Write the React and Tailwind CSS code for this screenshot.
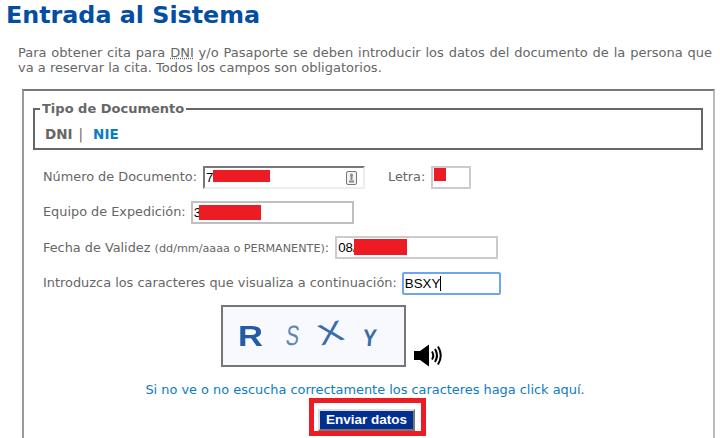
import React from "react";

const Redacted = ({ className }) => (
  <span className={"absolute bg-[#ed1c24] " + className} />
);

const Speaker = () => (
  <svg width="29" height="23" viewBox="0 0 29 23" className="block">
    <path d="M0 7h6l9-6.500v22l-9-6.500H0z" fill="#000" />
    <path d="M18 7.500q2.500 4 0 8" fill="none" stroke="#000" strokeWidth="2" />
    <path d="M21 5q4 6.500 0 13" fill="none" stroke="#000" strokeWidth="2" />
    <path d="M24 2.500q5.500 9 0 18" fill="none" stroke="#000" strokeWidth="2" />
  </svg>
);

const KeyIcon = () => (
  <svg width="11" height="14" viewBox="0 0 11 14" className="absolute right-[8px] top-[5px]">
    <rect x="0.500" y="0.500" width="10" height="13" rx="1.500" fill="#f2f2f2" stroke="#777" />
    <circle cx="5.500" cy="4" r="1.500" fill="#888" />
    <rect x="4.500" y="5" width="2" height="4" fill="#888" />
    <rect x="3" y="9.500" width="5" height="2" fill="#888" />
  </svg>
);

export default function App() {
  return (
    <div className="h-[438px] w-[720px] overflow-hidden bg-white font-['DejaVu_Sans',Verdana,sans-serif] text-[#666]">
      <h1 className="ml-[6px] pt-[1px] text-[23.800px] leading-[29px] font-bold text-[#034ea2]">
        Entrada al Sistema
      </h1>
      <div className="mt-[15px] ml-[18px] w-[694px] text-[13px] leading-[15px]">
        <p className="[text-align-last:justify]">
          Para obtener cita para{" "}
          <abbr className="underline decoration-dotted" title="Documento Nacional de Identidad">
            DNI
          </abbr>{" "}
          y/o Pasaporte se deben introducir los datos del documento de la persona que
        </p>
        <p>va a reservar la cita. Todos los campos son obligatorios.</p>
      </div>

      <div className="mt-[14px] ml-[22px] h-[400px] w-[693px] border-2 border-t-[#777] border-r-[#bbb] border-b-0 border-l-[#999] pt-[10px] pl-[9px]">
        <fieldset className="h-[49px] w-[670px] border-[2px] border-[#666] pl-[5px]">
          <legend className="px-[2px] text-[13px] leading-[16px] font-bold">Tipo de Documento</legend>
          <div className="mt-[9px] flex items-center pl-[5px] text-[13.500px] leading-[16px] font-bold">
            <span>DNI</span>
            <span className="ml-[6px] font-normal">|</span>
            <a className="ml-[10px] text-[#0b7cc4]">NIE</a>
          </div>
        </fieldset>

        <div className="mt-[16px] flex items-center pl-[10px] text-[12.850px]">
          <label className="mr-[6px] mb-[2px]">Número de Documento:</label>
          <div className="relative h-[23px] w-[162px]">
            <input
              readOnly
              value="7"
              className="h-full w-full border-2 border-t-[#777] border-r-[#eee] border-b-[#eee] border-l-[#777] bg-white pl-[1px] font-['Liberation_Sans',sans-serif] text-[13.330px] text-black"
            />
            <Redacted className="left-[10px] top-[4px] h-[12px] w-[57px]" />
            <KeyIcon />
          </div>
          <label className="mr-[6px] mb-[2px] ml-[23px]">Letra:</label>
          <div className="relative h-[23px] w-[40px]">
            <input readOnly className="h-full w-full border-2 border-[#ccc] bg-white" />
            <Redacted className="left-[3px] top-[2px] h-[13px] w-[12px]" />
          </div>
        </div>

        <div className="mt-[12px] flex items-center pl-[10px] text-[12.850px]">
          <label className="mr-[5px] mb-[2px]">Equipo de Expedición:</label>
          <div className="relative h-[23px] w-[163px]">
            <input
              readOnly
              value="3"
              className="h-full w-full border-2 border-[#c0c0c0] bg-white pl-[1px] font-['Liberation_Sans',sans-serif] text-[13.330px] text-black"
            />
            <Redacted className="left-[8px] top-[4px] h-[15px] w-[62px]" />
          </div>
        </div>

        <div className="mt-[12px] flex items-center pl-[10px] text-[12.850px]">
          <label className="mr-[6px]">
            Fecha de Validez{" "}
            <span className="text-[11.200px]">(dd/mm/aaaa o PERMANENTE)</span>:
          </label>
          <div className="relative h-[23px] w-[163px]">
            <input
              readOnly
              value="08/"
              className="h-full w-full border-2 border-[#ccc] bg-white pl-[1px] font-['Liberation_Sans',sans-serif] text-[13.330px] text-black"
            />
            <Redacted className="left-[19px] top-[3px] h-[16px] w-[53px]" />
          </div>
        </div>

        <div className="mt-[13px] flex items-center pl-[10px] text-[12.900px]">
          <label className="mr-[5px] mb-[2px]">Introduzca los caracteres que visualiza a continuación:</label>
          <div className="h-[23px] w-[99px] rounded-[2px] border-2 border-[#6ea6ee] pl-[1px] font-['Liberation_Sans',sans-serif] text-[13.330px] leading-[19px] text-black">
            BSXY<span className="border-l border-black" />
          </div>
        </div>

        <div className="mt-[10px] ml-[188px] flex items-end">
          <div className="flex h-[62px] w-[185px] items-center border-2 border-[#777] bg-[#f8f8ff] pl-[15px] font-['Liberation_Sans',sans-serif]">
            <span className="w-[25px] origin-left scale-x-[1.15] text-[30px] leading-none font-bold text-[#245ca4] blur-[0.4px]">R</span>
            <span className="ml-[23px] w-[12px] origin-left scale-x-[0.7] skew-x-[-10deg] text-[28px] leading-none text-[#5c86b5]">S</span>
            <span className="ml-[20px] w-[27px] origin-left scale-x-[1.35] rotate-[-15deg] text-[29px] leading-none text-[#3a6da8]">X</span>
            <span className="ml-[18px] mt-[3px] w-[14px] origin-left scale-x-[0.85] skew-x-[-6deg] text-[24px] leading-none font-bold text-[#3a6da8]">Y</span>
          </div>
          <div className="ml-[8px]">
            <Speaker />
          </div>
        </div>

        <div className="mt-[15px] w-[672px] pr-[8px] text-center text-[12.900px] leading-[16px] text-[#0b7cc4]">
          Si no ve o no escucha correctamente los caracteres haga click aquí.
        </div>

        <div className="mt-0 ml-[276px] flex h-[38px] w-[117px] items-start border-[5px] border-[#ed1c24] bg-white pt-[6px] pl-[4px]">
          <button className="h-[22px] w-[97px] border-2 border-t-[#ddd] border-r-[#777] border-b-[#777] border-l-[#ddd] bg-[#00308f] font-['Liberation_Sans',sans-serif] text-[13.500px] leading-[16px] font-bold text-white">
            Enviar datos
          </button>
        </div>
      </div>
    </div>
  );
}
